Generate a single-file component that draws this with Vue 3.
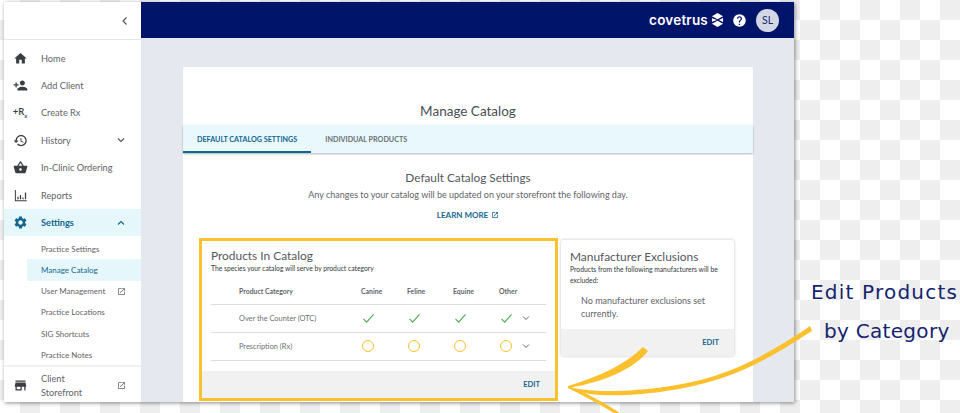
<script setup>
const icons = {
  home: "M10 20v-6h4v6h5v-8h3L12 3 2 12h3v8z",
  add: "M15 12c2.21 0 4-1.79 4-4s-1.79-4-4-4-4 1.79-4 4 1.79 4 4 4zm-9-2V7H4v3H1v2h3v3h2v-3h3v-2H6zm9 4c-2.67 0-8 1.34-8 4v2h16v-2c0-2.66-5.33-4-8-4z",
  history: "M13 3c-4.97 0-9 4.03-9 9H1l3.89 3.89.07.14L9 12H6c0-3.87 3.13-7 7-7s7 3.13 7 7-3.13 7-7 7c-1.93 0-3.68-.79-4.94-2.06l-1.42 1.42C8.27 19.99 10.51 21 13 21c4.97 0 9-4.03 9-9s-4.03-9-9-9zm-1 5v5l4.28 2.54.72-1.21-3.5-2.08V8H12z",
  basket: "M17.21 9l-4.38-6.56c-.19-.28-.51-.42-.83-.42-.32 0-.64.14-.83.43L6.79 9H2c-.55 0-1 .45-1 1 0 .09.01.18.04.27l2.54 9.27c.23.84 1 1.46 1.92 1.46h13c.92 0 1.69-.62 1.93-1.46l2.54-9.27L23 10c0-.55-.45-1-1-1h-4.79zM9 9l3-4.4L15 9H9zm3 8c-1.1 0-2-.9-2-2s.9-2 2-2 2 .9 2 2-.9 2-2 2z",
  reports: "M3 3h1.6v16.4H22V21H3zM7 14h2v4H7zM11 11h2v7h-2zM15 15h2v3h-2zM19 7h2v11h-2z",
  gear: "M19.14 12.94c.04-.3.06-.61.06-.94 0-.32-.02-.64-.07-.94l2.03-1.58c.18-.14.23-.41.12-.61l-1.92-3.32c-.12-.22-.37-.29-.59-.22l-2.39.96c-.5-.38-1.03-.7-1.62-.94l-.36-2.54c-.04-.24-.24-.41-.48-.41h-3.84c-.24 0-.43.17-.47.41l-.36 2.54c-.59.24-1.13.57-1.62.94l-2.39-.96c-.22-.08-.47 0-.59.22L2.74 8.87c-.12.21-.08.47.12.61l2.03 1.58c-.05.3-.09.63-.09.94s.02.64.07.94l-2.03 1.58c-.18.14-.23.41-.12.61l1.92 3.32c.12.22.37.29.59.22l2.39-.96c.5.38 1.03.7 1.62.94l.36 2.54c.05.24.24.41.48.41h3.84c.24 0 .44-.17.47-.41l.36-2.54c.59-.24 1.13-.56 1.62-.94l2.39.96c.22.08.47 0 .59-.22l1.92-3.32c.12-.22.07-.47-.12-.61l-2.01-1.58zM12 15.6c-1.98 0-3.6-1.62-3.6-3.6s1.62-3.6 3.6-3.6 3.6 1.62 3.6 3.6-1.62 3.6-3.6 3.6z",
  store: "M20 4H4v2h16V4zm1 10v-2l-1-5H4l-1 5v2h1v6h10v-6h4v6h2v-6h1zm-9 4H6v-4h6v4z",
};
const external = "M19 19H5V5h7V3H5c-1.11 0-2 .9-2 2v14c0 1.1.89 2 2 2h14c1.1 0 2-.9 2-2v-7h-2v7zM14 3v2h3.59l-9.83 9.83 1.41 1.41L19 6.41V10h2V3h-7z";
const help = "M12 2C6.48 2 2 6.48 2 12s4.48 10 10 10 10-4.48 10-10S17.52 2 12 2zm1 17h-2v-2h2v2zm2.07-7.75l-.9.92C13.45 12.9 13 13.5 13 15h-2v-.5c0-1.1.45-2.1 1.17-2.83l1.24-1.26c.37-.36.59-.86.59-1.41 0-1.1-.9-2-2-2s-2 .9-2 2H8c0-2.21 1.79-4 4-4s4 1.79 4 4c0 .88-.36 1.68-.93 2.25z";

const mainNav = [
  { label: "Home", icon: "home" },
  { label: "Add Client", icon: "add" },
  { label: "Create Rx", rx: true },
  { label: "History", icon: "history", chevron: "down" },
  { label: "In-Clinic Ordering", icon: "basket" },
  { label: "Reports", icon: "reports" },
  { label: "Settings", icon: "gear", chevron: "up", active: true },
];
const subNav = [
  { label: "Practice Settings" },
  { label: "Manage Catalog", active: true },
  { label: "User Management", external: true },
  { label: "Practice Locations" },
  { label: "SIG Shortcuts" },
  { label: "Practice Notes" },
];
const species = ["Canine", "Feline", "Equine", "Other"];
const categories = [
  { name: "Over the Counter (OTC)", on: true },
  { name: "Prescription (Rx)", on: false },
];
</script>

<template>
  <div class="page">
    <div class="window">
      <aside class="sidebar">
        <div class="side-top">
          <svg class="chev-left" width="10" height="10" viewBox="0 0 10 10"><path d="M6.5 1.5 3 5l3.5 3.5" fill="none" stroke="#555" stroke-width="1.2" /></svg>
        </div>
        <nav class="nav">
          <div v-for="item in mainNav" :key="item.label" class="nav-row" :class="{ active: item.active }">
            <span class="nav-icon">
              <span v-if="item.rx" class="rx">+R<sub>x</sub></span>
              <svg v-else width="15" height="15" viewBox="0 0 24 24"><path :d="icons[item.icon]" fill="currentColor" /></svg>
            </span>
            <span class="nav-label">{{ item.label }}</span>
            <svg v-if="item.chevron" class="nav-chev" width="10" height="10" viewBox="0 0 10 10">
              <path :d="item.chevron === 'up' ? 'M2 6.5 5 3.5l3 3' : 'M2 3.5 5 6.5l3-3'" fill="none" stroke="currentColor" stroke-width="1.1" />
            </svg>
          </div>
          <div class="subnav">
            <div v-for="item in subNav" :key="item.label" class="sub-row" :class="{ active: item.active }">
              <span>{{ item.label }}</span>
              <svg v-if="item.external" class="ext" width="9" height="9" viewBox="0 0 24 24"><path :d="external" fill="#666" /></svg>
            </div>
          </div>
        </nav>
        <div class="store-row">
          <span class="nav-icon"><svg width="15" height="15" viewBox="0 0 24 24"><path :d="icons.store" fill="currentColor" /></svg></span>
          <span class="nav-label store-label">Client Storefront</span>
          <svg class="ext" width="9" height="9" viewBox="0 0 24 24"><path :d="external" fill="#666" /></svg>
        </div>
      </aside>

      <div class="main">
        <header class="topbar">
          <span class="logo">covetrus</span>
          <svg class="logo-mark" width="13" height="14" viewBox="0 0 14 15">
            <path d="M7 0l6 3.4L7 6.6 3.5 4.9 1 3.4zM1 5.5l5.5 2L1 9.5zM7 8.4l6 3.2L7 15l-6-3.4zM8.5 7.5 13 5.3v4.4z" fill="#fff" />
          </svg>
          <svg class="help" width="15" height="15" viewBox="0 0 24 24"><path :d="help" fill="#fff" /></svg>
          <span class="avatar">SL</span>
        </header>

        <div class="content">
          <section class="card">
            <h1 class="title">Manage Catalog</h1>
            <div class="tabs">
              <span class="tab current">DEFAULT CATALOG SETTINGS</span>
              <span class="tab">INDIVIDUAL PRODUCTS</span>
            </div>
            <div class="intro">
              <h2>Default Catalog Settings</h2>
              <p>Any changes to your catalog will be updated on your storefront the following day.</p>
              <a class="learn">LEARN MORE
                <svg width="8" height="8" viewBox="0 0 24 24"><path :d="external" fill="currentColor" /></svg>
              </a>
            </div>

            <div class="panels">
              <div class="highlight">
                <div class="panel-body">
                  <h3>Products In Catalog</h3>
                  <p class="panel-sub">The species your catalog will serve by product category</p>
                  <div class="grid head">
                    <span class="cat">Product Category</span>
                    <span v-for="s in species" :key="s">{{ s }}</span>
                  </div>
                  <div v-for="c in categories" :key="c.name" class="grid row">
                    <span class="cat">{{ c.name }}</span>
                    <span v-for="s in species" :key="s" class="mark">
                      <svg v-if="c.on" width="13" height="11" viewBox="0 0 14 12"><path d="M1.5 6.5 5 10l7.5-8.5" fill="none" stroke="#4caf50" stroke-width="1.2" /></svg>
                      <i v-else class="ring"></i>
                    </span>
                    <svg class="row-chev" width="10" height="10" viewBox="0 0 10 10"><path d="M2 3.5 5 6.5l3-3" fill="none" stroke="#666" stroke-width="1" /></svg>
                  </div>
                </div>
                <div class="panel-foot">EDIT</div>
              </div>

              <div class="exclusions">
                <div class="excl-body">
                  <h3>Manufacturer Exclusions</h3>
                  <p class="panel-sub">Products from the following manufacturers will be excluded:</p>
                  <p class="none">No manufacturer exclusions set currently.</p>
                </div>
                <div class="panel-foot">EDIT</div>
              </div>
            </div>
          </section>
        </div>
      </div>
    </div>

    <svg class="arrows" width="960" height="413" viewBox="0 0 960 413">
      <path d="M810 326 C790 340 755 362 720 374 C690 385 640 392 600 391 C585 390 575 389 568 386 C575 391 585 394 600 395 C640 397 690 389 722 378 C760 365 790 345 812 331 Z" fill="#fbc02d" />
      <path d="M643 347 L648 351 C635 368 605 382 568 388 L568 386 C600 376 625 365 643 347 Z" fill="#fbc02d" />
      <path d="M568 386 C585 392 603 402 620 413 L614 413 C600 405 585 396 568 388 Z" fill="#fbc02d" />
    </svg>
    <div class="note note-one">Edit Products</div>
    <div class="note note-two">by Category</div>
  </div>
</template>

<style>
html, body {
  margin: 0;
  overflow: hidden;
}
</style>

<style scoped>
.page {
  position: relative;
  width: 960px;
  height: 413px;
  overflow: hidden;
  padding: 2px 0 0 4px;
  box-sizing: border-box;
  font-family: Lato, "Liberation Sans", sans-serif;
  background-color: #fff;
  background-image: conic-gradient(#eee 25%, #fff 0 50%, #eee 0 75%, #fff 0);
  background-size: 40px 40px;
}

.window {
  display: flex;
  width: 790px;
  height: 400px;
  overflow: hidden;
  background: #fff;
  box-shadow: 1px 1px 4px rgba(0, 0, 0, 0.45);
}

.sidebar {
  width: 137px;
  flex-shrink: 0;
  display: flex;
  flex-direction: column;
  background: #fff;
}

.side-top {
  height: 38px;
  display: flex;
  align-items: center;
  justify-content: flex-end;
  padding-right: 11px;
  border-bottom: 1px solid #e8e8ea;
  box-sizing: border-box;
}

.nav {
  padding-top: 4.5px;
  border-bottom: 2px solid #f1f1f1;
}

.nav-row {
  height: 27.4px;
  display: flex;
  align-items: center;
  color: #5f6368;
  font-size: 9.2px;
}

.nav-row .nav-icon,
.store-row .nav-icon {
  color: #3a3d42;
}

.nav-icon {
  width: 37px;
  flex-shrink: 0;
  display: flex;
  justify-content: center;
  padding-right: 5px;
  box-sizing: border-box;
}

.nav-label {
  flex: 1;
}

.nav-chev {
  margin-right: 15px;
  color: #555;
}

.rx {
  font-size: 9.5px;
  line-height: 1;
  font-weight: 600;
}

.rx sub {
  font-size: 6px;
}

.nav-row.active {
  background: #e6f7fc;
  color: #12668f;
  font-weight: 700;
}

.nav-row.active .nav-icon,
.nav-row.active .nav-chev {
  color: #12668f;
}

.subnav {
  padding-top: 2px;
}

.sub-row {
  height: 21.2px;
  margin-left: 23px;
  padding: 0 15px 0 14px;
  display: flex;
  align-items: center;
  justify-content: space-between;
  color: #5f6368;
  font-size: 8px;
}

.sub-row.active {
  background: #e6f7fc;
  color: #12668f;
}

.store-row {
  flex: 1;
  display: flex;
  align-items: center;
  padding: 2px 15px 0 0;
  color: #5f6368;
  font-size: 9.2px;
  line-height: 14px;
}

.store-label {
  max-width: 60px;
}

.ext {
  flex-shrink: 0;
}

.store-row .ext {
  margin-left: auto;
}

.main {
  flex: 1;
  min-width: 0;
  display: flex;
  flex-direction: column;
  background: #e6e8ef;
}

.topbar {
  height: 36px;
  flex-shrink: 0;
  display: flex;
  align-items: center;
  justify-content: flex-end;
  padding-right: 15px;
  background: #00146a;
  color: #fff;
}

.logo {
  font-family: Inter, "Liberation Sans", sans-serif;
  font-size: 13.5px;
  font-weight: 600;
  letter-spacing: 0.2px;
}

.logo-mark {
  margin-left: 3px;
}

.help {
  margin-left: 8px;
}

.avatar {
  width: 23px;
  height: 23px;
  margin-left: 9px;
  border-radius: 50%;
  display: flex;
  align-items: center;
  justify-content: center;
  background: #d3d7e3;
  color: #1c2a6e;
  font-size: 10.5px;
}

.content {
  flex: 1;
  min-height: 0;
  padding: 29px 41px 0 42px;
}

.card {
  height: 340px;
  background: #fff;
  border-radius: 2px;
}

.title {
  margin: 0;
  padding-top: 35px;
  height: 58px;
  box-sizing: border-box;
  text-align: center;
  font-size: 13.5px;
  line-height: 18px;
  font-weight: 400;
  color: #4a4d52;
}

.tabs {
  height: 28px;
  display: flex;
  background: #e8f8fd;
  box-shadow: 0 1px 2px rgba(0, 0, 0, 0.3);
}

.tab {
  padding: 0 14px;
  display: flex;
  align-items: center;
  font-size: 7.2px;
  font-weight: 700;
  color: #6c7075;
}

.tab.current {
  color: #12668f;
  border-bottom: 2px solid #12668f;
  padding-top: 2px;
  box-sizing: border-box;
}

.intro {
  padding-top: 17px;
  text-align: center;
  height: 85px;
  box-sizing: border-box;
}

.intro h2 {
  margin: 0;
  font-size: 11.8px;
  line-height: 16px;
  font-weight: 400;
  color: #54575c;
}

.intro p {
  margin: 2px 0 0;
  font-size: 9px;
  line-height: 14px;
  color: #5f6368;
}

.learn {
  display: inline-flex;
  align-items: center;
  gap: 3px;
  margin-top: 7px;
  font-size: 8px;
  font-weight: 700;
  color: #12668f;
}

.panels {
  display: flex;
  align-items: flex-start;
  gap: 3px;
  padding-left: 16px;
}

.highlight {
  width: 359px;
  height: 163px;
  flex-shrink: 0;
  box-sizing: border-box;
  border: 3px solid #fbc02d;
  display: flex;
  flex-direction: column;
}

.panel-body {
  flex: 1;
  padding: 7px 9px 0;
}

h3 {
  margin: 0;
  font-size: 11.9px;
  line-height: 15px;
  font-weight: 400;
  color: #54575c;
}

.panel-sub {
  margin: 0;
  font-size: 6.75px;
  line-height: 10.5px;
  color: #33363a;
}

.grid {
  position: relative;
  display: grid;
  grid-template-columns: 122px 46px 46px 46px 46px;
  align-items: center;
  padding-left: 28px;
  border-bottom: 1px solid #ddd;
}

.head {
  height: 26px;
  margin-top: 5px;
  font-size: 6.9px;
  font-weight: 700;
  color: #5f6368;
  padding-bottom: 1px;
  box-sizing: border-box;
}

.row {
  height: 28px;
  box-sizing: border-box;
  font-size: 7.4px;
  color: #6c7075;
}

.mark {
  display: flex;
  padding-left: 1px;
}

.ring {
  display: block;
  width: 10px;
  height: 10px;
  border: 1.2px solid #fbc02d;
  border-radius: 50%;
}

.row-chev {
  position: absolute;
  left: 310px;
  top: 8px;
}

.panel-foot {
  height: 27px;
  flex-shrink: 0;
  display: flex;
  align-items: center;
  justify-content: flex-end;
  padding-right: 15px;
  background: #f1f1f1;
  font-size: 7.5px;
  font-weight: 700;
  color: #12668f;
}

.exclusions {
  width: 173px;
  height: 116px;
  margin-top: 2px;
  display: flex;
  flex-direction: column;
  border-radius: 2px;
  box-shadow: 0 0 3px rgba(0, 0, 0, 0.25);
}

.excl-body {
  flex: 1;
  padding: 9px 9px 0;
}

.none {
  margin: 9px 0 0 11px;
  font-size: 9px;
  line-height: 13px;
  color: #5f6368;
}

.arrows {
  position: absolute;
  left: 0;
  top: 0;
  pointer-events: none;
}

.note {
  position: absolute;
  font-family: "DejaVu Sans", sans-serif;
  font-size: 20px;
  line-height: 24px;
  letter-spacing: 1.2px;
  color: #14246e;
  white-space: nowrap;
}

.note-one {
  left: 811px;
  top: 280px;
}

.note-two {
  left: 824px;
  top: 319px;
  letter-spacing: 0.3px;
}
</style>
